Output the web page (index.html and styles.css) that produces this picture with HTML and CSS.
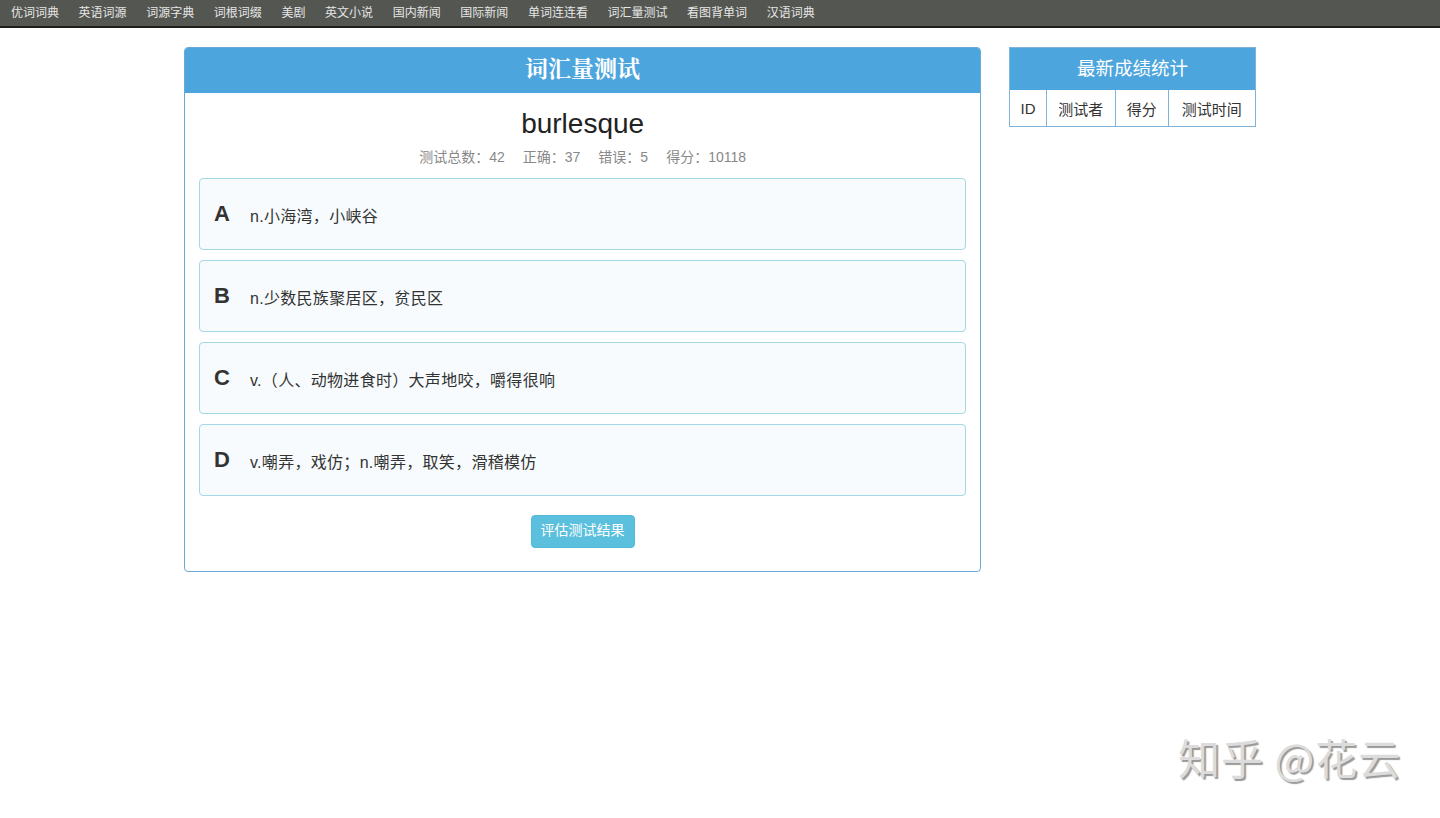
FILE: index.html
```html
<!DOCTYPE html>
<html lang="zh">
<head>
<meta charset="utf-8">
<title>词汇量测试</title>
<link rel="stylesheet" href="styles.css">
</head>
<body>
<nav class="topnav">
  <a>优词词典</a><a>英语词源</a><a>词源字典</a><a>词根词缀</a><a>美剧</a><a>英文小说</a><a>国内新闻</a><a>国际新闻</a><a>单词连连看</a><a>词汇量测试</a><a>看图背单词</a><a>汉语词典</a>
</nav>
<div class="wrap">
  <section class="panel main">
    <header class="panel-head">词汇量测试</header>
    <div class="panel-body">
      <h1 class="word">burlesque</h1>
      <p class="stats"><span>测试总数：42</span><span>正确：37</span><span>错误：5</span><span>得分：10118</span></p>
      <div class="option"><span class="letter">A</span><span class="def">n.小海湾，小峡谷</span></div>
      <div class="option"><span class="letter">B</span><span class="def">n.少数民族聚居区，贫民区</span></div>
      <div class="option"><span class="letter">C</span><span class="def">v.（人、动物进食时）大声地咬，嚼得很响</span></div>
      <div class="option"><span class="letter">D</span><span class="def">v.嘲弄，戏仿；n.嘲弄，取笑，滑稽模仿</span></div>
      <div class="actions"><button class="btn">评估测试结果</button></div>
    </div>
  </section>
  <aside class="panel side">
    <header class="side-head">最新成绩统计</header>
    <table class="score">
      <tr><td class="c-id">ID</td><td class="c-user">测试者</td><td class="c-score">得分</td><td class="c-time">测试时间</td></tr>
    </table>
  </aside>
</div>
<div class="watermark">知乎 @花云</div>
</body>
</html>
```
FILE: styles.css
```css
* { box-sizing: border-box; }
html, body { margin: 0; padding: 0; background: #fff; }
body {
  font-family: "Liberation Sans", "Noto Sans CJK SC", sans-serif;
  color: #333;
  height: 818px;
  position: relative;
  overflow: hidden;
}
.topnav {
  height: 28px;
  background: #545651;
  border-bottom: 2px solid #1e1f1d;
  display: flex;
  align-items: center;
  padding-left: 11px;
  gap: 19.6px;
}
.topnav a {
  font-size: 12px;
  color: #e6e6e6;
  line-height: 26px;
  white-space: nowrap;
}
.wrap {
  width: 1072px;
  margin: 19px auto 0;
  display: flex;
  align-items: flex-start;
  gap: 28px;
}
.panel.main {
  width: 798px;
  border: 1px solid #6aa9d6;
  border-radius: 4px;
  overflow: hidden;
}
.panel-head {
  height: 45px;
  background: #4da5dd;
  color: #fff;
  font-family: "Noto Serif CJK SC", "Liberation Serif", "Noto Sans CJK SC", serif;
  font-weight: bold;
  font-size: 23px;
  line-height: 40px;
  text-align: center;
}
.panel-body {
  padding: 13px 14px 23px;
}
.word {
  margin: 0;
  font-weight: normal;
  font-size: 28px;
  line-height: 36px;
  text-align: center;
  color: #222;
}
.stats {
  margin: 6px 0 12px;
  font-size: 14px;
  line-height: 18px;
  color: #888;
  display: flex;
  justify-content: center;
  gap: 18px;
}
.option {
  height: 72px;
  margin-bottom: 10px;
  background: #f7fbfd;
  border: 1px solid #a6d7e6;
  border-radius: 4px;
  display: flex;
  align-items: center;
  padding: 0 0 0 14px;
}
.letter {
  font-weight: bold;
  font-size: 22px;
  width: 36px;
  color: #333;
}
.def {
  font-size: 16px;
  color: #333;
  margin-top: 2px;
  letter-spacing: 0.3px;
}
.actions {
  text-align: center;
  padding-top: 9px;
}
.btn {
  border: 1px solid #53b9d8;
  background: #5bc0de;
  color: #fff;
  font-family: "Liberation Sans", "Noto Sans CJK SC", sans-serif;
  font-size: 14px;
  line-height: 28px;
  height: 33px;
  width: 104px;
  border-radius: 4px;
  padding: 0 0 3px;
}
.panel.side {
  width: 247px;
  border: 1px solid #7fb3d8;
}
.side-head {
  height: 42px;
  background: #4da5dd;
  color: #fff;
  font-size: 18.5px;
  line-height: 42px;
  text-align: center;
}
.score {
  width: 100%;
  border-collapse: collapse;
  font-size: 15px;
  color: #333;
}
.score td {
  height: 36px;
  text-align: center;
  border-left: 1px solid #7fb3d8;
  padding: 0;
}
.score td:first-child { border-left: none; }
.c-id { width: 36px; }
.c-user { width: 69px; }
.c-score { width: 53px; }
.watermark {
  position: absolute;
  left: 1178px;
  top: 730px;
  font-family: "Noto Sans CJK SC", sans-serif;
  font-size: 42px;
  line-height: 54px;
  color: #dcdcdc;
  text-shadow: 2px 2px 1px #9a9a9a;
  letter-spacing: 1px;
}
```
